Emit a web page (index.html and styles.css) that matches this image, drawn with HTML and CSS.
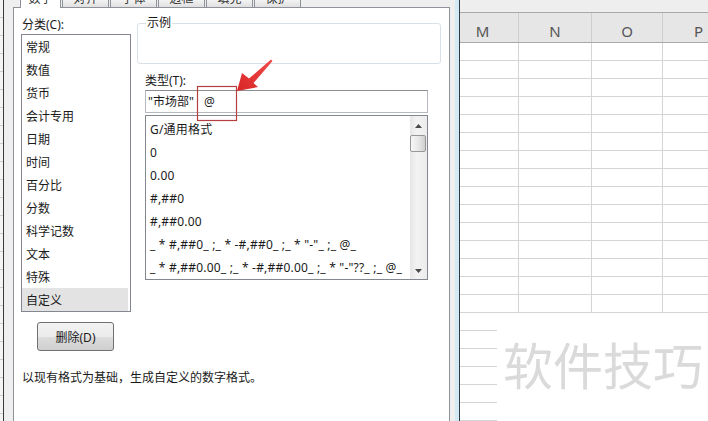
FILE: index.html
```html
<!DOCTYPE html>
<html lang="zh-CN">
<head>
<meta charset="utf-8">
<title>设置单元格格式</title>
<link rel="stylesheet" href="styles.css">
</head>
<body>
<div class="screen">
  <div class="left-strip"></div>
  <div class="dialog">
    <div class="dialog-body">
      <div class="tabs">
        <div class="tab tab-active"><span>数字</span></div>
        <div class="tab"><span>对齐</span></div>
        <div class="tab"><span>字体</span></div>
        <div class="tab"><span>边框</span></div>
        <div class="tab"><span>填充</span></div>
        <div class="tab"><span>保护</span></div>
      </div>
      <div class="panel">
        <div class="cols">
          <div class="col-left">
            <div class="label">分类(C):</div>
            <ul class="category-list">
              <li>常规</li>
              <li>数值</li>
              <li>货币</li>
              <li>会计专用</li>
              <li>日期</li>
              <li>时间</li>
              <li>百分比</li>
              <li>分数</li>
              <li>科学记数</li>
              <li>文本</li>
              <li>特殊</li>
              <li class="selected">自定义</li>
            </ul>
            <button class="btn" type="button">删除(D)</button>
          </div>
          <div class="col-right">
            <div class="sample"><div class="legend">示例</div></div>
            <div class="label type-label">类型(T):</div>
            <div class="type-input">"市场部" <span class="at">@</span></div>
            <div class="format-list">
              <ul class="format-items">
                <li>G/通用格式</li>
                <li>0</li>
                <li>0.00</li>
                <li>#,##0</li>
                <li>#,##0.00</li>
                <li>_ * #,##0_ ;_ * -#,##0_ ;_ * "-"_ ;_ @_</li>
                <li>_ * #,##0.00_ ;_ * -#,##0.00_ ;_ * "-"??_ ;_ @_</li>
              </ul>
              <div class="scrollbar">
                <div class="sb-btn sb-up"><svg width="7" height="4" viewBox="0 0 7 4"><path d="M0 4 L3.5 0 L7 4 Z" fill="#4a4a4a"/></svg></div>
                <div class="sb-thumb"></div>
                <div class="sb-space"></div>
                <div class="sb-btn sb-down"><svg width="7" height="4" viewBox="0 0 7 4"><path d="M0 0 L7 0 L3.5 4 Z" fill="#4a4a4a"/></svg></div>
              </div>
            </div>
          </div>
        </div>
        <div class="desc">以现有格式为基础，生成自定义的数字格式。</div>
      </div>
    </div>
    <div class="dialog-edge"></div>
  </div>
  <div class="sheet">
    <div class="sheet-top"></div>
    <div class="sheet-head">
      <div class="col c-m head-cell">M</div>
      <div class="col c-n head-cell">N</div>
      <div class="col c-o head-cell">O</div>
      <div class="col c-p head-cell">P</div>
    </div>
    <div class="sheet-body">
      <div class="col c-m"></div>
      <div class="col c-n"></div>
      <div class="col c-o"></div>
      <div class="col c-p"></div>
    </div>
    <div class="watermark">软件技巧</div>
  </div>
  <svg class="annot" width="708" height="421" viewBox="0 0 708 421">
    <defs>
      <linearGradient id="arr" x1="0" y1="1" x2="1" y2="0">
        <stop offset="0" stop-color="#d92626"/>
        <stop offset="1" stop-color="#f04a4a"/>
      </linearGradient>
    </defs>
    <rect x="197.5" y="86.5" width="39" height="34" fill="none" stroke="#b3403f" stroke-width="1.2"/>
    <path d="M237 91 L242 73 L249 78.5 L271 59.5 L272.5 61 L253.5 83 L258 87 Z" fill="url(#arr)"/>
  </svg>
</div>
</body>
</html>
```

FILE: styles.css
```css
body {
  margin: 0;
  font-family: "Noto Sans", "Noto Sans CJK SC", sans-serif;
  font-size: 12px;
  color: #1a1a1a;
}

.screen {
  position: relative;
  display: flex;
  width: 708px;
  height: 421px;
  overflow: hidden;
  background: #fff;
}

.left-strip {
  width: 3px;
  flex: none;
  background: repeating-linear-gradient(to bottom, #f4f4f4 0 17px, #cdcdcd 17px 18px);
}

.dialog {
  flex: none;
  display: flex;
  border-left: 1px solid #3b3b3b;
  border-right: 1px solid #2f3b45;
  background: #efefef;
}

.dialog-body {
  width: 451px;
  box-sizing: border-box;
  padding: 0 5px 0 9px;
  display: flex;
  flex-direction: column;
}

.dialog-edge {
  width: 4px;
  background: #d3e9f4;
}

.tabs {
  height: 7px;
  flex: none;
  display: flex;
  gap: 1px;
  padding-left: 7px;
}

.tab {
  width: 47px;
  height: 7px;
  box-sizing: border-box;
  border-left: 1px solid #8e9197;
  border-right: 1px solid #8e9197;
  background: linear-gradient(#f3f3f3, #e0e0e0);
  overflow: hidden;
  text-align: center;
  color: #333;
}

.tab span {
  display: block;
  line-height: 16px;
  margin-top: -9px;
}

.tab-active {
  width: 41px;
  height: 8px;
  background: #fff;
  position: relative;
  z-index: 1;
}

.panel {
  flex: 1;
  border: 1px solid #8e9197;
  border-bottom: none;
  background: #fff;
  padding: 8px 0 0 7px;
  display: flex;
  flex-direction: column;
}

.cols {
  display: flex;
  gap: 6px;
}

.col-left {
  width: 110px;
  display: flex;
  flex-direction: column;
  align-items: flex-start;
}

.label {
  line-height: 17px;
  height: 16px;
  padding-left: 1px;
}

.category-list {
  margin: 2px 0 0;
  padding: 0 2px 0 0;
  list-style: none;
  width: 110px;
  height: 278px;
  box-sizing: border-box;
  border: 1px solid #828790;
}

.category-list li {
  height: 23px;
  line-height: 25px;
  padding-left: 4px;
}

.category-list li.selected {
  background: #e3e3e3;
}

.btn {
  margin: 10px 0 0 16px;
  width: 77px;
  height: 29px;
  padding: 0;
  border: 1px solid #707070;
  border-radius: 3px;
  background: linear-gradient(#f2f2f2 0%, #ebebeb 50%, #dddddd 51%, #cfcfcf 100%);
  font: inherit;
  color: #1a1a1a;
}

.col-right {
  width: 304px;
  display: flex;
  flex-direction: column;
}

.sample {
  margin-top: 7px;
  height: 41px;
  box-sizing: border-box;
  border: 1px solid #d9e1e6;
  border-radius: 3px;
}

.legend {
  width: fit-content;
  margin: -9px 0 0 8px;
  padding: 0 1px;
  background: #fff;
  line-height: 16px;
}

.type-label {
  margin: 8px 0 0 8px;
  padding-left: 0;
}

.type-input {
  margin: 2px 0 0 8px;
  width: 283px;
  height: 23px;
  box-sizing: border-box;
  border: 1px solid #b5b8be;
  border-top-color: #8b8d92;
  padding-left: 2px;
  line-height: 22px;
  white-space: pre;
}

.at {
  margin-left: 7px;
}

.format-list {
  margin: 2px 0 0 8px;
  width: 283px;
  height: 165px;
  box-sizing: border-box;
  border: 1px solid #828790;
  display: flex;
}

.format-items {
  flex: 1;
  list-style: none;
  margin: 0;
  padding: 2px 0 0 4px;
  overflow: hidden;
  letter-spacing: 0.2px;
}

.format-items li {
  height: 23px;
  line-height: 24px;
  white-space: pre;
}

.scrollbar {
  width: 17px;
  flex: none;
  background: linear-gradient(to right, #e6e6e6, #f3f3f3 40%, #ececec);
  display: flex;
  flex-direction: column;
}

.sb-btn {
  height: 17px;
  display: flex;
  align-items: center;
  justify-content: center;
}

.sb-up {
  padding-top: 3px;
  box-sizing: border-box;
}

.sb-thumb {
  margin-top: 2px;
  width: 16px;
  height: 17px;
  box-sizing: border-box;
  border: 1px solid #979797;
  border-radius: 2px;
  background: linear-gradient(to right, #f7f7f7, #e6e6e6 55%, #cfcfcf);
}

.sb-space {
  flex: 1;
}

.desc {
  margin-top: 18px;
  line-height: 17px;
  padding-left: 1px;
}

.sheet {
  flex: 1;
  position: relative;
  display: flex;
  flex-direction: column;
  overflow: hidden;
}

.sheet-top {
  height: 12px;
  flex: none;
  background: #eeeeee;
  border-bottom: 1px solid #a9a9a9;
}

.sheet-head {
  height: 29px;
  flex: none;
  display: flex;
  background: #e6e6e6;
  border-bottom: 1px solid #a8a8a8;
}

.col {
  flex: none;
  box-sizing: border-box;
  border-right: 1px solid #d4d4d4;
}

.c-m { width: 59px; }
.c-n { width: 73px; }
.c-o { width: 71px; }
.c-p { width: 72px; }

.head-cell {
  display: flex;
  justify-content: center;
  align-items: center;
  padding-top: 7px;
  font-family: "Noto Sans", sans-serif;
  font-size: 15px;
  color: #555;
  border-right-color: #cfcfcf;
}

.head-cell.c-m {
  padding-right: 13px;
}

.sheet-body {
  flex: 1;
  display: flex;
  background: repeating-linear-gradient(to bottom, #fff 0 17px, #d4d4d4 17px 18px);
}

.watermark {
  position: absolute;
  left: 37px;
  top: 313px;
  right: 0;
  bottom: 0;
  background: #fff;
  padding: 25px 0 0 6px;
  font-family: "Noto Sans CJK SC", sans-serif;
  font-size: 50px;
  line-height: 50px;
  color: #dadada;
  white-space: nowrap;
}

.annot {
  position: absolute;
  left: 0;
  top: 0;
  pointer-events: none;
}
```
